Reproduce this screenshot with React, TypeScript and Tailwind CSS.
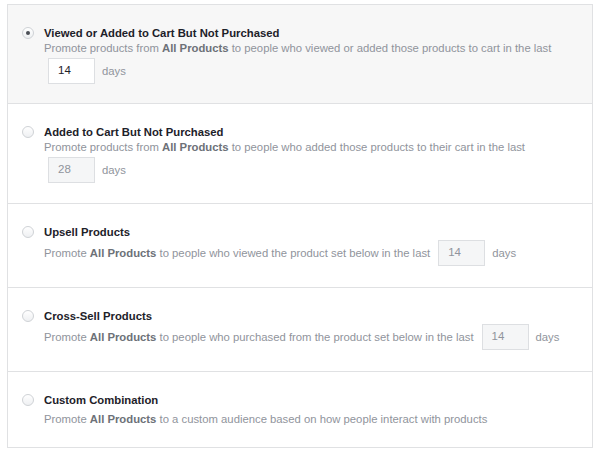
import React from "react";

function Radio({ checked }: { checked?: boolean }) {
  return (
    <div className="w-[12px] h-[12px] rounded-full border border-[#cfd2d6] bg-gradient-to-b from-[#ffffff] to-[#eef0f2] flex items-center justify-center shrink-0 mt-[2px]">
      {checked && <div className="w-[4px] h-[4px] rounded-full bg-[#4b4f56]" />}
    </div>
  );
}

function DayInput({ value, active }: { value: string; active?: boolean }) {
  return (
    <div
      className={
        "w-[47px] h-[26px] border flex items-center pl-[9px] text-[11.5px] " +
        (active
          ? "bg-white border-[#dddfe2] text-[#1d2129]"
          : "bg-[#f5f6f7] border-[#dddfe2] text-[#90949c]")
      }
    >
      {value}
    </div>
  );
}

function B({ children }: { children: React.ReactNode }) {
  return <span className="font-bold text-[#6d7178]">{children}</span>;
}

export default function App() {
  return (
    <div
      className="w-[600px] h-[455px] bg-white pt-[4px] pl-[7px]"
      style={{ fontFamily: '"Liberation Sans", Arial, sans-serif' }}
    >
      <div className="w-[586px] border border-[#e0e1e3] flex flex-col">
        {/* Section 1 */}
        <div className="bg-[#f7f7f7] border-b border-[#e0e1e3] pl-[14px] pt-[20px] pb-[20px] h-[99px] flex gap-[10px]">
          <Radio checked />
          <div className="flex flex-col">
            <div className="text-[11.3px] leading-[16px] font-bold text-[#1d2129]">
              Viewed or Added to Cart But Not Purchased
            </div>
            <div className="text-[11.3px] leading-[15px] text-[#90949c]">
              Promote products from <B>All Products</B> to people who viewed or added those products to cart in the last
            </div>
            <div className="flex items-center gap-[7px] mt-[2px] ml-[4px] text-[11.3px] text-[#90949c]">
              <DayInput value="14" active />
              <span>days</span>
            </div>
          </div>
        </div>
        {/* Section 2 */}
        <div className="border-b border-[#e0e1e3] pl-[14px] pt-[20px] h-[100px] flex gap-[10px]">
          <Radio />
          <div className="flex flex-col">
            <div className="text-[11.3px] leading-[16px] font-bold text-[#1d2129]">
              Added to Cart But Not Purchased
            </div>
            <div className="text-[11.3px] leading-[15px] text-[#90949c]">
              Promote products from <B>All Products</B> to people who added those products to their cart in the last
            </div>
            <div className="flex items-center gap-[7px] mt-[2px] ml-[4px] text-[11.3px] text-[#90949c]">
              <DayInput value="28" />
              <span>days</span>
            </div>
          </div>
        </div>
        {/* Section 3 */}
        <div className="border-b border-[#e0e1e3] pl-[14px] pt-[20px] h-[84px] flex gap-[10px]">
          <Radio />
          <div className="flex flex-col">
            <div className="text-[11.3px] leading-[16px] font-bold text-[#1d2129]">
              Upsell Products
            </div>
            <div className="flex items-center gap-[7px] text-[11.3px] text-[#90949c]">
              <span className="mr-[1px]">
                Promote <B>All Products</B> to people who viewed the product set below in the last
              </span>
              <DayInput value="14" />
              <span>days</span>
            </div>
          </div>
        </div>
        {/* Section 4 */}
        <div className="border-b border-[#e0e1e3] pl-[14px] pt-[20px] h-[84px] flex gap-[10px]">
          <Radio />
          <div className="flex flex-col">
            <div className="text-[11.3px] leading-[16px] font-bold text-[#1d2129]">
              Cross-Sell Products
            </div>
            <div className="flex items-center gap-[7px] text-[11.3px] text-[#90949c]">
              <span className="mr-[1px]">
                Promote <B>All Products</B> to people who purchased from the product set below in the last
              </span>
              <DayInput value="14" />
              <span>days</span>
            </div>
          </div>
        </div>
        {/* Section 5 */}
        <div className="pl-[14px] pt-[20px] h-[75px] flex gap-[10px]">
          <Radio />
          <div className="flex flex-col">
            <div className="text-[11.3px] leading-[16px] font-bold text-[#1d2129]">
              Custom Combination
            </div>
            <div className="text-[11.3px] leading-[16px] mt-[3px] text-[#90949c]">
              Promote <B>All Products</B> to a custom audience based on how people interact with products
            </div>
          </div>
        </div>
      </div>
    </div>
  );
}
